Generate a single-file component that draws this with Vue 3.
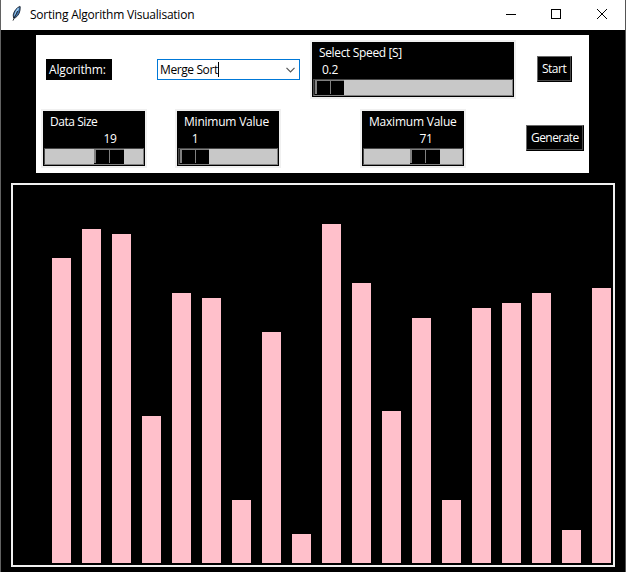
<script setup>
const bars = [305, 334, 329, 147, 270, 265, 63, 231, 29, 339, 280, 152, 245, 63, 255, 260, 270, 33, 275]
const scales = [
  { id: 'speed', label: 'Select Speed [S]', value: '0.2', pos: 0 },
  { id: 'size', label: 'Data Size', value: '19', pos: 49 },
  { id: 'min', label: 'Minimum Value', value: '1', pos: 0 },
  { id: 'max', label: 'Maximum Value', value: '71', pos: 46 }
]
</script>

<template>
  <div class="window">
    <header class="titlebar">
      <svg class="feather" width="12" height="18" viewBox="0 0 12 18">
        <path d="M8.8 1.4C6 2.6 3 5.6 2.2 10L2.6 13L4.6 12.6C7.6 10.4 9.4 7 9.2 1.6Z" fill="#3f74ad" stroke="#1b2430" stroke-width="0.9" />
        <path d="M7.6 3.2C5.6 5.4 4.4 7.6 3.8 10.6" fill="none" stroke="#9ccbf0" stroke-width="1.6" />
        <path d="M6.6 6L2 15.6" fill="none" stroke="#15181d" stroke-width="0.9" />
      </svg>
      <span class="title">Sorting Algorithm Visualisation</span>
      <svg class="controls" width="103" height="12" viewBox="0 0 103 12" fill="none" stroke="#000" stroke-width="1">
        <path d="M0 5.5H10" />
        <rect x="45.5" y="0.5" width="9" height="9" />
        <path d="M91 0L101 10M101 0L91 10" />
      </svg>
    </header>

    <section class="panel">
      <div class="caption"><span>Algorithm:</span></div>
      <div class="combo">
        <span>Merge Sort</span><i class="caret"></i>
        <svg width="9" height="6" viewBox="0 0 9 6"><path d="M0.5 0.8L4.5 4.8L8.5 0.8" fill="none" stroke="#555" stroke-width="1.2" /></svg>
      </div>
      <template v-for="(s, i) in scales" :key="s.id">
        <div class="scale" :class="s.id">
          <div class="label"><span>{{ s.label }}</span></div>
          <div class="value" :style="{ marginLeft: s.pos + 'px' }"><span>{{ s.value }}</span></div>
          <div class="trough">
            <div class="thumb" :style="{ marginLeft: s.pos + 'px' }"><i></i><i></i></div>
          </div>
        </div>
        <button v-if="i === 0" class="start"><span>Start</span></button>
      </template>
      <button class="generate"><span>Generate</span></button>
    </section>

    <section class="canvas">
      <div v-for="(h, i) in bars" :key="i" class="bar" :style="{ height: h + 'px' }"></div>
    </section>
  </div>
</template>

<style>
body { background: #000; overflow: hidden; }
</style>

<style scoped>
* { box-sizing: border-box; }
.window {
  width: 626px; height: 572px; background: #000;
  border-left: 1px solid #626262; border-right: 1px solid #555;
  font: 12px/16px "Open Sans", sans-serif; letter-spacing: -0.3px;
  white-space: nowrap; display: flex; flex-direction: column;
}
.titlebar { height: 30px; flex: none; background: #fff; display: flex; align-items: flex-start; color: #000; }
.feather { margin: 5px 0 0 10px; }
.title { margin: 7px 0 0 7px; width: 200px; letter-spacing: -0.23px; }
.controls { margin: 9px 16px 0 auto; }
.panel {
  width: 553px; height: 138px; flex: none; margin: 5px 0 0 35px; background: #fff;
  display: grid; grid-template-columns: 116px 153px 216px 68px; grid-template-rows: 69px 69px;
  align-items: center; justify-items: start;
}
.caption { margin-left: 10px; width: 66px; height: 21px; padding: 3px 0 0 3px; background: #000; color: #fff; letter-spacing: -0.15px; }
.combo {
  margin-left: 5px; width: 143px; height: 21px; padding: 0 4px 0 2px; border: 1px solid #0078d7;
  display: flex; align-items: center; color: #000; letter-spacing: -0.4px;
}
.combo svg { margin-left: auto; }
.caret { width: 1px; height: 15px; background: #000; }
.scale { width: 106px; height: 59px; border: 2px solid #f0f0f0; background: #000; color: #fff; padding: 3px 1px 1px; }
.speed { width: 206px; margin-left: 5px; }
.speed .label { letter-spacing: -0.35px; }
.size { margin-left: 5px; }
.size .label { letter-spacing: -0.45px; }
.min { margin-left: 23px; }
.min .label, .max .label { letter-spacing: -0.22px; }
.max { margin-left: 55px; }
.label { height: 17px; padding-left: 6px; }
.value { width: 34px; height: 17px; text-align: center; }
.trough { height: 17px; border: 1px solid #484848; border-right-color: #808080; border-bottom-color: #808080; background: #c8c8c8; }
.thumb { width: 30px; height: 15px; background: #000; display: flex; }
.thumb i { width: 15px; height: 14px; border-top: 1px solid #808080; border-left: 1px solid #808080; }
.thumb i:first-child { border-left-width: 2px; }
.speed .thumb, .min .thumb { border-left: 1px solid #222; }
button {
  align-self: start; margin-top: 21px; height: 26px; padding: 0 0 0 4px; background: #000; color: #fff;
  border: 1px solid; border-color: #696969 #000 #000 #696969; box-shadow: inset -1px -1px #484848;
  font: inherit; letter-spacing: inherit; text-align: left;
}
.start { width: 35px; margin-left: 16px; }
.generate { width: 58px; margin-left: 5px; letter-spacing: -0.55px; }
.start { letter-spacing: -0.5px; }
.canvas {
  width: 604px; height: 384px; flex: none; margin: 10px 0 0 10px; border: 2px solid #f0f0f0;
  padding: 0 0 2px 39px; display: flex; align-items: flex-end; gap: 11px;
}
.bar { width: 19px; flex: none; background: #ffc0cb; }
</style>
